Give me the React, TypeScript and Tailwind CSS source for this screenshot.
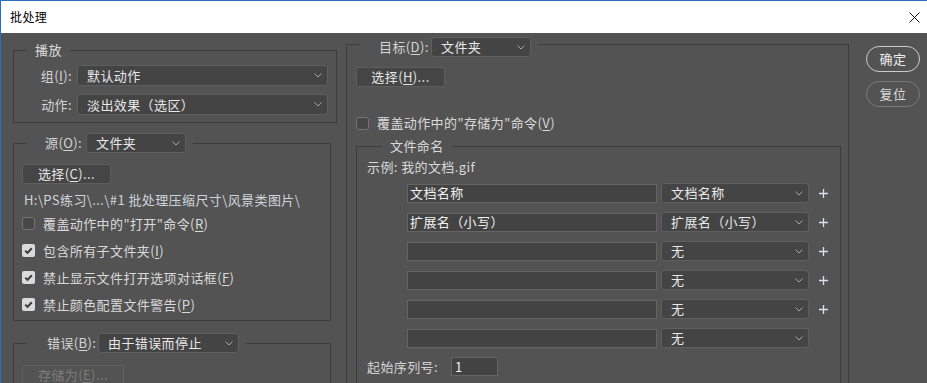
import React from "react";

// mnemonic letter, underlined
function K({ c }: { c: string }) {
  return <span className="underline underline-offset-2 decoration-1">{c}</span>;
}

function Chevron() {
  return (
    <svg width="8" height="5" viewBox="0 0 8 5" className="shrink-0">
      <path d="M0.5 0.5 L4 4 L7.5 0.5" fill="none" stroke="#a6a6a6" strokeWidth="1" />
    </svg>
  );
}

function Select({ value, className }: { value: string; className: string }) {
  return (
    <div
      className={`flex items-center justify-between rounded-[3px] border border-[#5e5e5e] bg-[#444444] pl-[9px] pr-[5px] text-[#e8e8e8] ${className}`}
    >
      <span className="whitespace-nowrap">{value}</span>
      <Chevron />
    </div>
  );
}

function Button({ children, className, disabled }: { children: React.ReactNode; className: string; disabled?: boolean }) {
  return (
    <div
      className={`flex h-[20px] items-center justify-center rounded-[2px] border ${
        disabled ? "border-[#606060] bg-[#535353] text-[#7c7c7c]" : "border-[#5e5e5e] bg-[#454545] text-[#e6e6e6]"
      } ${className}`}
    >
      {children}
    </div>
  );
}

function Check({ checked }: { checked?: boolean }) {
  if (checked) {
    return (
      <div className="flex h-[13px] w-[13px] shrink-0 items-center justify-center rounded-[2px] bg-[#dadada]">
        <svg width="11" height="11" viewBox="0 0 11 11">
          <path d="M2.2 5.6 L4.5 7.9 L8.8 3.2" fill="none" stroke="#3a3a3a" strokeWidth="2" />
        </svg>
      </div>
    );
  }
  return <div className="h-[13px] w-[13px] shrink-0 rounded-[3px] border border-[#747474] bg-[#474747]" />;
}

function CheckRow({ checked, children, className }: { checked?: boolean; children: React.ReactNode; className: string }) {
  return (
    <div className={`flex items-center gap-[8px] ${className}`}>
      <Check checked={checked} />
      <span className="whitespace-nowrap text-[#dadada]">{children}</span>
    </div>
  );
}

function Plus() {
  return (
    <svg width="9" height="9" viewBox="0 0 9 9" className="shrink-0">
      <path d="M4.5 0 V9 M0 4.5 H9" stroke="#d6e2ee" strokeWidth="1.3" />
    </svg>
  );
}

function NameRow({ text, option, plus }: { text: string; option: string; plus?: boolean }) {
  return (
    <div className="flex h-[20px] items-center pl-[40px]">
      <div className="flex h-[19px] w-[250px] items-center border border-[#646464] bg-[#434343] pl-[2px] text-[#f0f0f0]">
        {text}
      </div>
      <Select value={option} className="ml-[4px] h-[20px] w-[148px]" />
      {plus && (
        <div className="ml-[10px]">
          <Plus />
        </div>
      )}
    </div>
  );
}

export default function App() {
  const rows = [
    { text: "文档名称", option: "文档名称", plus: true },
    { text: "扩展名（小写）", option: "扩展名（小写）", plus: true },
    { text: "", option: "无", plus: true },
    { text: "", option: "无", plus: true },
    { text: "", option: "无", plus: true },
    { text: "", option: "无", plus: false },
  ];

  return (
    <div className="flex h-[383px] w-[927px] flex-col overflow-hidden border-l border-t border-[#2a6fb8] bg-[#535353] font-['Noto_Sans_CJK_SC','Noto_Sans',sans-serif] text-[13px] leading-[18px] tracking-[0.4px] text-[#d4d4d4]">
      {/* title bar */}
      <div className="flex h-[32px] shrink-0 items-center justify-between bg-white pl-[9px] pr-[7px] text-[12px] text-black">
        <span>批处理</span>
        <svg width="11" height="11" viewBox="0 0 11 11">
          <path d="M0.5 0.5 L10.5 10.5 M10.5 0.5 L0.5 10.5" stroke="#111" strokeWidth="1" />
        </svg>
      </div>

      <div className="flex flex-1 items-start pl-[12px]">
        {/* left column */}
        <div className="w-[324px] shrink-0 pt-[8px]">
          <fieldset className="border border-[#3c3c3c] pb-[7px]">
            <legend className="ml-[13px] h-[18px] px-[8px] text-[#dadada]">播放</legend>
            <div className="flex flex-col gap-[8px] pr-[8px] pt-[6px]">
              <div className="flex items-center">
                <span className="w-[58px] text-right">
                  组(<K c="I" />):
                </span>
                <Select value="默认动作" className="ml-[5px] h-[21px] flex-1" />
              </div>
              <div className="flex items-center">
                <span className="w-[58px] text-right">动作:</span>
                <Select value="淡出效果（选区）" className="ml-[5px] h-[21px] flex-1" />
              </div>
            </div>
          </fieldset>

          <fieldset className="mt-[10px] w-[318px] border border-[#3c3c3c] pb-[2px]">
            <legend className="ml-[13px] pl-[18px] pr-[7px]">
              <div className="flex h-[20px] items-center">
                <span className="w-[36px] whitespace-nowrap">
                  源(<K c="O" />):
                </span>
                <Select value="文件夹" className="ml-[5px] h-[20px] w-[100px] pr-[4px]" />
              </div>
            </legend>
            <div className="pl-[8px] pt-[11px]">
              <Button className="w-[89px]">
                选择(<K c="C" />)...
              </Button>
              <div className="ml-[2px] mt-[7px] h-[18px] whitespace-nowrap text-[#cfd5db]">
                H:\PS练习\...\#1 批处理压缩尺寸\风景类图片\
              </div>
              <CheckRow className="mt-[1px] h-[27px]">
                覆盖动作中的"打开"命令(<K c="R" />)
              </CheckRow>
              <CheckRow checked className="h-[27px]">
                包含所有子文件夹(<K c="I" />)
              </CheckRow>
              <CheckRow checked className="h-[27px]">
                禁止显示文件打开选项对话框(<K c="F" />)
              </CheckRow>
              <CheckRow checked className="h-[27px]">
                禁止颜色配置文件警告(<K c="P" />)
              </CheckRow>
            </div>
          </fieldset>

          <fieldset className="mt-[12px] w-[318px] border border-[#3c3c3c] pb-[20px]">
            <legend className="ml-[13px] pl-[20px] pr-[7px]">
              <div className="flex h-[20px] items-center">
                <span className="w-[46px] whitespace-nowrap">
                  错误(<K c="B" />):
                </span>
                <Select value="由于错误而停止" className="ml-[5px] h-[20px] w-[141px] pr-[4px]" />
              </div>
            </legend>
            <div className="pl-[8px] pt-[12px]">
              <Button disabled className="w-[102px]">
                存储为(<K c="E" />)...
              </Button>
            </div>
          </fieldset>
        </div>

        {/* right column */}
        <div className="-mt-[2px] ml-[9px] w-[503px] shrink-0">
          <fieldset className="border border-[#3c3c3c] pb-[40px] pl-[9px] pr-[7px]">
            <legend className="ml-[3px] pl-[20px] pr-[7px] pt-[6px]">
              <div className="flex h-[20px] items-center">
                <span className="w-[47px] whitespace-nowrap">
                  目标(<K c="D" />):
                </span>
                <Select value="文件夹" className="ml-[5px] h-[20px] w-[100px] pr-[4px]" />
              </div>
            </legend>
            <div className="pt-[10px]">
              <Button className="w-[89px]">
                选择(<K c="H" />)...
              </Button>
            </div>
            <CheckRow className="mt-[26px] h-[20px]">
              覆盖动作中的"存储为"命令(<K c="V" />)
            </CheckRow>

            <fieldset className="mt-[4px] border border-[#3c3c3c] pb-[40px] pl-[10px]">
              <legend className="ml-[15px] h-[18px] px-[8px] text-[#dadada]">文件命名</legend>
              <div className="mt-[3px] h-[18px] text-[#d8d8d8]">示例: 我的文档.gif</div>
              <div className="mt-[7px] flex flex-col gap-[9px]">
                {rows.map((r, i) => (
                  <NameRow key={i} text={r.text} option={r.option} plus={r.plus} />
                ))}
              </div>
              <div className="mt-[9px] flex items-center">
                <span className="w-[84px] whitespace-nowrap">起始序列号:</span>
                <div className="flex h-[19px] w-[47px] items-center border border-[#646464] bg-[#434343] pl-[3px] text-[#f0f0f0]">
                  1
                </div>
              </div>
            </fieldset>
          </fieldset>
        </div>

        {/* buttons */}
        <div className="ml-[17px] flex w-[54px] shrink-0 flex-col gap-[9px] pt-[13px]">
          <div className="flex h-[26px] items-center justify-center rounded-full border-[1.5px] border-[#cccccc] text-[#ececec]">
            确定
          </div>
          <div className="flex h-[26px] items-center justify-center rounded-full border border-[#7a7a7a] text-[#dcdcdc]">
            复位
          </div>
        </div>
      </div>
    </div>
  );
}
